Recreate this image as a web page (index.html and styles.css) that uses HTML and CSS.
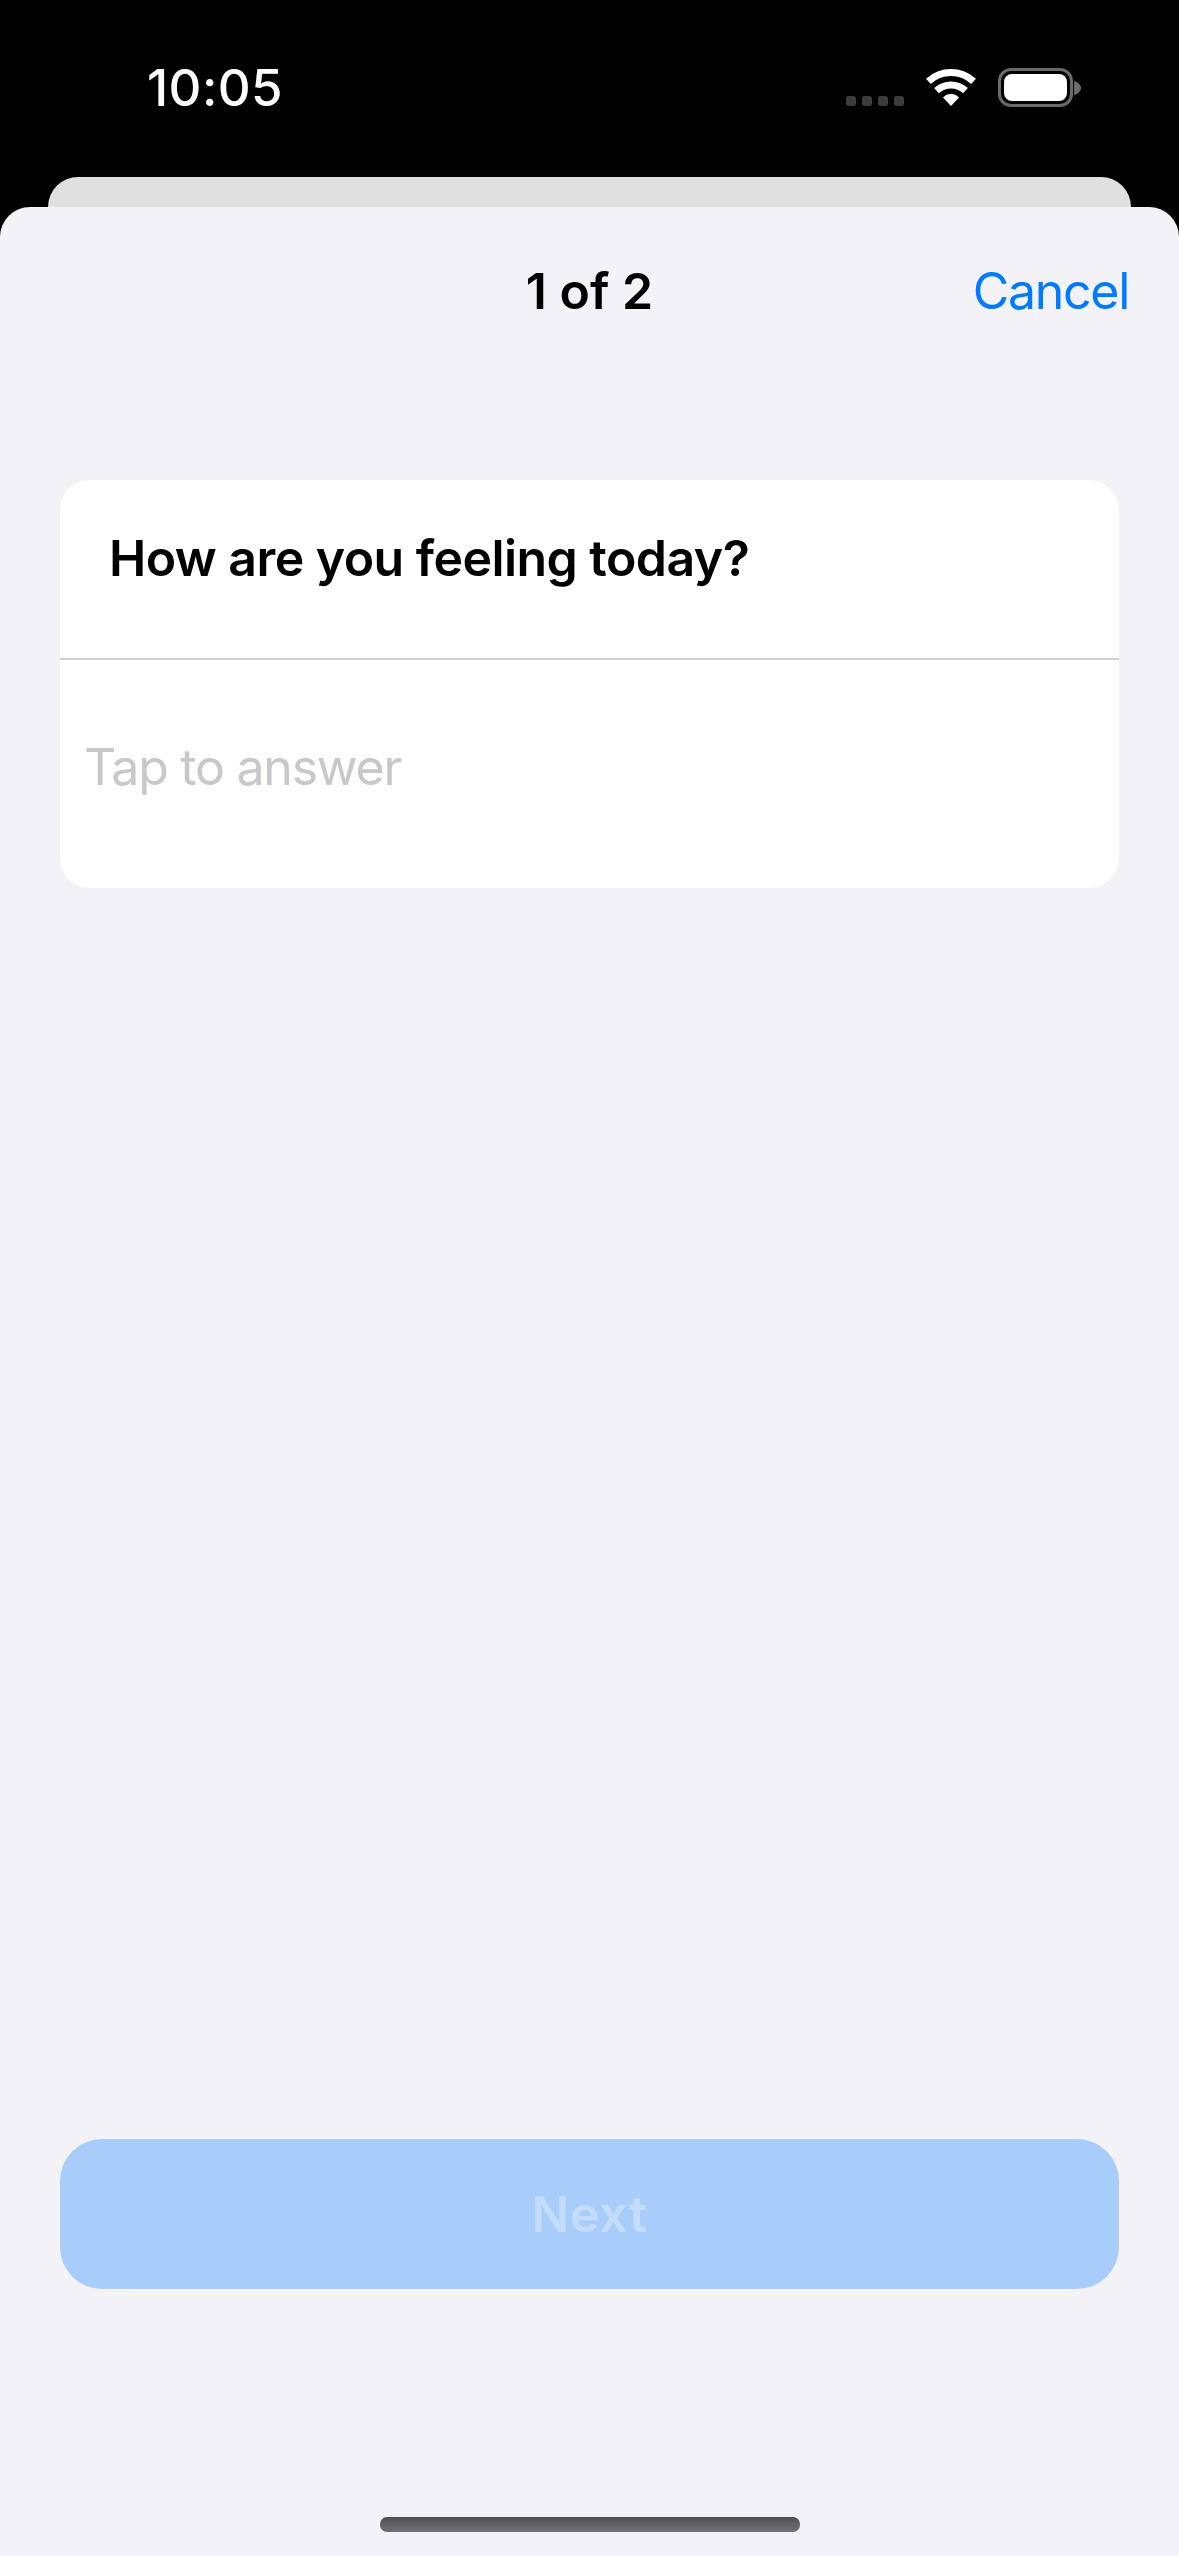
FILE: index.html
```html
<!DOCTYPE html>
<html lang="en">
<head>
<meta charset="utf-8">
<title>Question 1 of 2</title>
<link rel="stylesheet" href="styles.css">
</head>
<body>
<div class="screen">
  <header class="status">
    <span class="time">10:05</span>
    <div class="indicators">
      <div class="dots"><i></i><i></i><i></i><i></i></div>
      <svg class="wifi" width="50" height="37" viewBox="0 0 50 37">
        <path class="wifi-arc" d="M2.4 12.3A33.5 33.5 0 0 1 47.6 12.3"/>
        <path class="wifi-arc" d="M10.5 21.7A21.5 21.5 0 0 1 39.5 21.7"/>
        <path class="wifi-fill" d="M25 37L17 28.5A11 11 0 0 1 33 28.5Z"/>
      </svg>
      <div class="battery"><div class="battery-fill"></div></div>
      <svg class="battery-nub" width="7" height="14" viewBox="0 0 7 14"><path d="M0 0C4 1 7 4 7 7C7 10 4 13 0 14Z"/></svg>
    </div>
  </header>
  <div class="back-sheet"></div>
  <main class="sheet">
    <nav class="nav">
      <span></span>
      <h1 class="nav-title">1 of 2</h1>
      <a class="nav-cancel">Cancel</a>
    </nav>
    <section class="card">
      <h2 class="question">How are you feeling today?</h2>
      <div class="answer">Tap to answer</div>
    </section>
    <button class="next" disabled>Next</button>
    <div class="home"></div>
  </main>
</div>
</body>
</html>
```
FILE: styles.css
```css
* { box-sizing: border-box; }
html, body { margin: 0; padding: 0; background: #000; }
body { font-family: "Inter", "Liberation Sans", sans-serif; }
.screen { width: 1179px; height: 2556px; display: flex; flex-direction: column; overflow: hidden; background: #000; }

.status { height: 177px; display: flex; justify-content: space-between; align-items: flex-start; padding: 68px 98px 0 147px; }
.time { color: #fff; font-size: 51px; line-height: 40px; font-weight: 500; letter-spacing: 0.4px; }
.indicators { display: flex; align-items: flex-start; }
.dots { display: flex; gap: 6px; margin-top: 28px; margin-right: 22px; }
.dots i { width: 10px; height: 10px; border-radius: 3px; background: #3c3c3c; }
.wifi { margin-top: 1px; margin-right: 22px; }
.wifi-arc { fill: none; stroke: #fff; stroke-width: 7; }
.wifi-fill { fill: #fff; }
.battery { width: 75px; height: 39px; border: 3px solid #6b6b6b; border-radius: 13px; padding: 3px; }
.battery-fill { width: 100%; height: 100%; background: #fff; border-radius: 8px; }
.battery-nub { margin-top: 13px; margin-left: 1px; fill: #6b6b6b; }

.back-sheet { height: 30px; margin: 0 48px; background: #e0e0e0; border-radius: 30px 30px 0 0; }

.sheet { flex: 1; display: flex; flex-direction: column; background: #f2f2f7; border-radius: 30px 30px 0 0; }
.nav { height: 168px; display: grid; grid-template-columns: 1fr auto 1fr; align-items: center; padding-right: 50px; padding-left: 50px; }
.nav-title { margin: 0; font-size: 50px; font-weight: 600; line-height: 60px; color: #000; letter-spacing: 0; }
.nav-cancel { justify-self: end; font-size: 50px; line-height: 60px; color: #007aff; letter-spacing: -1.3px; }

.card { margin: 105px 60px 0; height: 408px; background: #fff; border-radius: 30px; display: flex; flex-direction: column; }
.question { margin: 0; height: 178px; padding: 58px 0 0 49px; font-size: 50px; line-height: 41px; font-weight: 600; color: #000; letter-spacing: -0.55px; }
.answer { flex: 1; border-top: 2px solid #cfcfd2; padding: 87px 0 0 24px; font-size: 50px; line-height: 41px; color: #c7c7cc; letter-spacing: -1.25px; }

.next { margin: auto 60px 0; height: 150px; border: 0; border-radius: 42px; background: #a9cdfa; color: #c4dcfb; font-family: inherit; font-size: 50px; font-weight: 600; letter-spacing: 0.7px; }
.home { align-self: center; width: 420px; height: 15px; margin: 228px 0 24px; border-radius: 7px; background: linear-gradient(#505050, #727276); }
```
